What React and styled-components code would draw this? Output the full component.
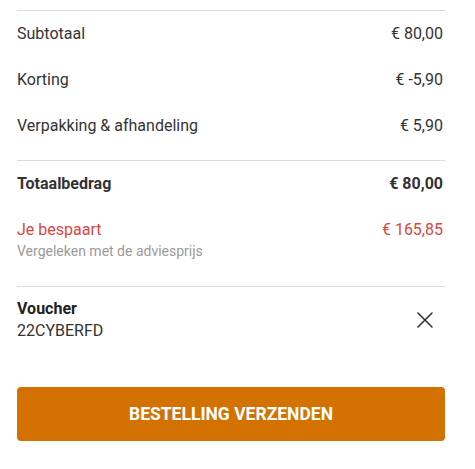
import React from "react";
import styled, { createGlobalStyle } from "styled-components";

const Global = createGlobalStyle`
  html, body { margin: 0; padding: 0; background: #fff; }
  body { font-family: Roboto, "Liberation Sans", Arial, sans-serif; color: #333; }
`;

const Wrap = styled.div`
  width: 428px;
  margin: 10px 0 0 17px;
  display: flex;
  flex-direction: column;
`;

const Section = styled.div`
  border-top: 1px solid #dcdcdc;
  padding-bottom: ${(p) => p.$pb || 0}px;
  padding-top: ${(p) => p.$pt || 0}px;
  display: flex;
  flex-direction: column;
`;

const Row = styled.div`
  display: flex;
  justify-content: space-between;
  align-items: center;
  padding: 12px 0;
  font-size: 16px;
  line-height: 22px;
  color: #333;
  font-weight: ${(p) => (p.$bold ? 700 : 400)};
`;

const Amount = styled.span`
  margin-right: 2px;
`;

const SaveBlock = styled.div`
  display: flex;
  flex-direction: column;
  padding-top: 12px;
`;

const SaveRow = styled.div`
  display: flex;
  justify-content: space-between;
  font-size: 16px;
  line-height: 22px;
  color: #d9473f;
`;

const Note = styled.div`
  font-size: 14px;
  line-height: 20px;
  color: #9a9a9a;
`;

const VoucherRow = styled.div`
  display: flex;
  justify-content: space-between;
  align-items: center;
`;

const VoucherText = styled.div`
  display: flex;
  flex-direction: column;
  font-size: 16px;
  line-height: 22px;
`;

const VoucherTitle = styled.span`
  font-weight: 700;
  color: #222;
`;

const CloseBtn = styled.button`
  border: 0;
  background: none;
  padding: 0;
  margin-right: 11px;
  width: 18px;
  height: 18px;
  display: flex;
  align-items: center;
  justify-content: center;
  cursor: pointer;
`;

const Submit = styled.button`
  margin-top: 45px;
  height: 54px;
  border: 0;
  border-radius: 4px;
  background: #d47200;
  color: #fff;
  font-family: Roboto, "Liberation Sans", Arial, sans-serif;
  font-weight: 700;
  font-size: 17.5px;
  text-transform: uppercase;
  cursor: pointer;
`;

export default function App() {
  return (
    <>
      <Global />
      <Wrap>
        <Section $pb={11}>
          <Row>
            <span>Subtotaal</span>
            <Amount>€ 80,00</Amount>
          </Row>
          <Row>
            <span>Korting</span>
            <Amount>€ -5,90</Amount>
          </Row>
          <Row>
            <span>Verpakking &amp; afhandeling</span>
            <Amount>€ 5,90</Amount>
          </Row>
        </Section>
        <Section $pb={25}>
          <Row $bold>
            <span>Totaalbedrag</span>
            <Amount>€ 80,00</Amount>
          </Row>
          <SaveBlock>
            <SaveRow>
              <span>Je bespaart</span>
              <Amount>€ 165,85</Amount>
            </SaveRow>
            <Note>Vergeleken met de adviesprijs</Note>
          </SaveBlock>
        </Section>
        <Section $pt={11}>
          <VoucherRow>
            <VoucherText>
              <VoucherTitle>Voucher</VoucherTitle>
              <span>22CYBERFD</span>
            </VoucherText>
            <CloseBtn aria-label="Verwijderen">
              <svg width="16" height="16" viewBox="0 0 16 16">
                <path d="M1 1 L15 15 M15 1 L1 15" stroke="#333" strokeWidth="1.6" strokeLinecap="round" />
              </svg>
            </CloseBtn>
          </VoucherRow>
        </Section>
        <Submit>Bestelling verzenden</Submit>
      </Wrap>
    </>
  );
}
